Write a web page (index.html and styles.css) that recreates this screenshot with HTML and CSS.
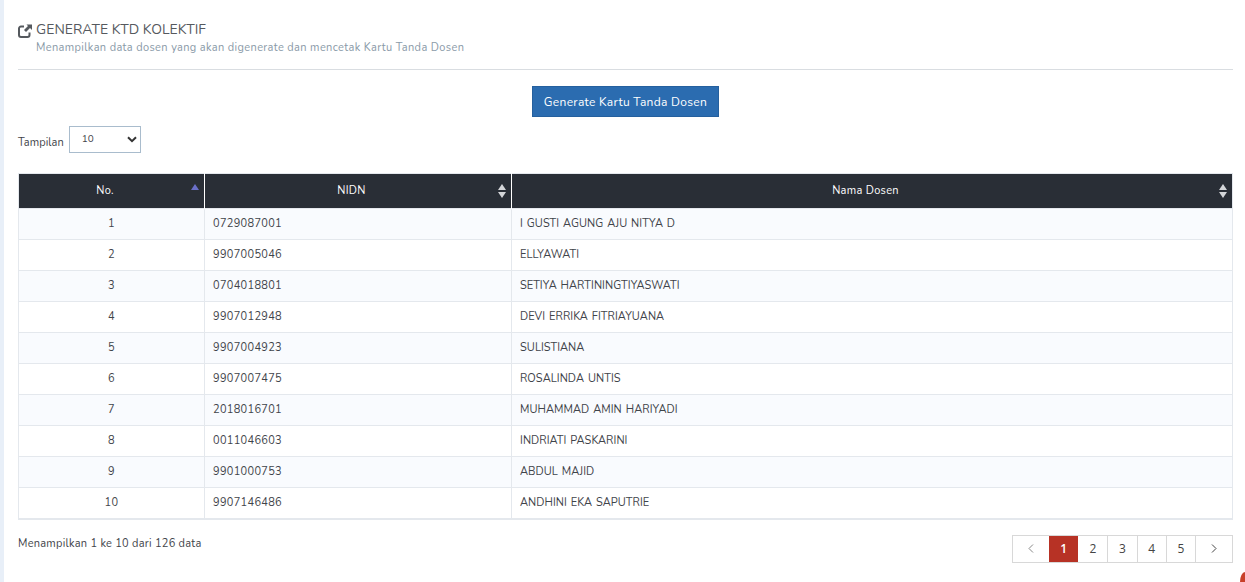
FILE: index.html
```html
<!DOCTYPE html>
<html lang="id">
<head>
  <meta charset="UTF-8">
  <title>Generate KTD Kolektif</title>
  <link rel="stylesheet" href="styles.css">
</head>
<body>
  <div class="content">
    <div class="page-head">
      <div class="page-title">
        <svg class="title-icon" viewBox="0 0 14 14" width="14" height="14">
          <path d="M6 2.500H3A2 2 0 0 0 1 4.500V11a2 2 0 0 0 2 2h6.500a2 2 0 0 0 2-2V8.500" fill="none" stroke="#55595e" stroke-width="2"/>
          <path d="M8.500 0.500H14V6L12 4 8 8 6 6 10 2Z" fill="#55595e"/>
        </svg>
        <span>GENERATE KTD KOLEKTIF</span>
      </div>
      <p class="page-sub">Menampilkan data dosen yang akan digenerate dan mencetak Kartu Tanda Dosen</p>
    </div>

    <div class="action-row">
      <button class="btn-generate">Generate Kartu Tanda Dosen</button>
    </div>

    <div class="length-row">
      <label>Tampilan</label>
      <div class="select-box">
        <span>10</span>
        <svg viewBox="0 0 10 7" width="10" height="7"><path d="M1 1.200 5 5.200 9 1.200" fill="none" stroke="#333" stroke-width="2"/></svg>
      </div>
    </div>

    <table class="data-table">
      <thead>
        <tr>
          <th class="col-no">No.<span class="sort-up"></span></th>
          <th class="col-nidn">NIDN<span class="sort-both"></span></th>
          <th>Nama Dosen<span class="sort-both"></span></th>
        </tr>
      </thead>
      <tbody>
        <tr><td class="num">1</td><td>0729087001</td><td class="name">I GUSTI AGUNG AJU NITYA D</td></tr>
        <tr><td class="num">2</td><td>9907005046</td><td class="name">ELLYAWATI</td></tr>
        <tr><td class="num">3</td><td>0704018801</td><td class="name">SETIYA HARTININGTIYASWATI</td></tr>
        <tr><td class="num">4</td><td>9907012948</td><td class="name">DEVI ERRIKA FITRIAYUANA</td></tr>
        <tr><td class="num">5</td><td>9907004923</td><td class="name">SULISTIANA</td></tr>
        <tr><td class="num">6</td><td>9907007475</td><td class="name">ROSALINDA UNTIS</td></tr>
        <tr><td class="num">7</td><td>2018016701</td><td class="name">MUHAMMAD AMIN HARIYADI</td></tr>
        <tr><td class="num">8</td><td>0011046603</td><td class="name">INDRIATI PASKARINI</td></tr>
        <tr><td class="num">9</td><td>9901000753</td><td class="name">ABDUL MAJID</td></tr>
        <tr><td class="num">10</td><td>9907146486</td><td class="name">ANDHINI EKA SAPUTRIE</td></tr>
      </tbody>
    </table>

    <div class="table-foot">
      <div class="info">Menampilkan 1 ke 10 dari 126 data</div>
      <div class="pagination">
        <a class="page-prev"><svg viewBox="0 0 6 9" width="6" height="9"><path d="M5 0.500 1 4.500 5 8.500" fill="none" stroke="#888" stroke-width="1"/></svg></a>
        <a class="active">1</a>
        <a>2</a>
        <a>3</a>
        <a>4</a>
        <a>5</a>
        <a class="page-next"><svg viewBox="0 0 6 9" width="6" height="9"><path d="M1 0.500 5 4.500 1 8.500" fill="none" stroke="#444" stroke-width="1"/></svg></a>
      </div>
    </div>
  </div>
  <div class="corner-dot"></div>
</body>
</html>
```

FILE: styles.css
```css
html, body {
  height: 100%;
}
body {
  margin: 0;
  background: #fff;
  color: #3f444a;
  font-family: "Nunito", "Open Sans", sans-serif;
  font-size: 11px;
  overflow: hidden;
  border-left: 4px solid #e8eff8;
  box-sizing: border-box;
  position: relative;
}
.content {
  padding: 21px 12px 0 14px;
}
.page-head {
  padding-bottom: 13px;
  border-bottom: 1px solid #d9dde1;
  height: 35px;
}
.page-title {
  display: flex;
  align-items: center;
  gap: 4px;
  font-size: 14px;
  line-height: 17px;
  color: #55595e;
  letter-spacing: 0.05px;
}
.title-icon {
  margin-top: 2px;
}
.page-sub {
  margin: 3px 0 0 18px;
  font-size: 11px;
  line-height: 14px;
  color: #8a9aa8;
  letter-spacing: 0.36px;
}
.action-row {
  display: flex;
  justify-content: center;
  padding-top: 16px;
}
.btn-generate {
  width: 187px;
  height: 31px;
  background: #2b6cb0;
  border: 1px solid #25609e;
  color: #fff;
  font-family: inherit;
  font-size: 12px;
  letter-spacing: 0.3px;
  padding: 0;
}
.length-row {
  display: flex;
  align-items: center;
  gap: 5px;
  margin-top: 9px;
  height: 27px;
  font-size: 11px;
  letter-spacing: 0.05px;
}
.length-row label {
  padding-top: 5px;
}
.select-box {
  width: 72px;
  height: 27px;
  box-sizing: border-box;
  border: 1px solid #a9bccd;
  display: flex;
  align-items: center;
  justify-content: space-between;
  padding: 0 3px 0 12px;
  font-size: 10px;
}
.select-box span {
  padding-bottom: 1px;
}
.data-table {
  width: 1215px;
  margin-top: 20px;
  border-collapse: collapse;
  table-layout: fixed;
  border: 1px solid #e4e8ed;
  border-bottom: 2px solid #e4e8ed;
}
.data-table th,
.data-table td {
  box-sizing: border-box;
}
.data-table th {
  position: relative;
  height: 35px;
  padding: 0 13px 1px 0;
  background: #292e36;
  color: #fff;
  font-size: 11px;
  font-weight: 400;
  letter-spacing: 0.3px;
  border-left: 1px solid #fff;
  text-align: center;
}
.data-table th:first-child {
  border-left: 0;
}
.col-no {
  width: 186px;
}
.col-nidn {
  width: 307px;
}
.data-table td {
  height: 31px;
  padding: 0 0 1px 8px;
  border: 1px solid #e4e8ed;
  font-size: 11px;
  letter-spacing: 0.3px;
  color: #3f444a;
}
.data-table td.num {
  padding: 0 0 1px 0;
  text-align: center;
}
.data-table td.name {
  letter-spacing: 0.06px;
  word-spacing: 1px;
}
.data-table tbody tr:nth-child(odd) td {
  background: #f9fbfe;
}
.sort-up {
  position: absolute;
  top: 10px;
  right: 5px;
  width: 0;
  height: 0;
  border-left: 4px solid transparent;
  border-right: 4px solid transparent;
  border-bottom: 6px solid #6a6fc8;
}
.sort-both {
  position: absolute;
  top: 10px;
  right: 5px;
  width: 0;
  height: 0;
  border-left: 4px solid transparent;
  border-right: 4px solid transparent;
  border-bottom: 6px solid #d4d6d9;
}
.sort-both::after {
  content: "";
  position: absolute;
  top: 8px;
  left: -4px;
  width: 0;
  height: 0;
  border-left: 4px solid transparent;
  border-right: 4px solid transparent;
  border-top: 6px solid #d4d6d9;
}
.table-foot {
  display: flex;
  justify-content: space-between;
  align-items: flex-start;
  margin-top: 16px;
}
.info {
  font-size: 11px;
  letter-spacing: 0.26px;
  line-height: 16px;
}
.pagination {
  display: flex;
  margin-top: -1px;
  border: 1px solid #d8d8d8;
  height: 26px;
  font-family: "Open Sans", sans-serif;
  font-size: 12px;
  color: #444;
}
.pagination a {
  width: 29.2px;
  box-sizing: border-box;
  display: flex;
  align-items: center;
  justify-content: center;
  border-left: 1px solid #d8d8d8;
}
.pagination a.active {
  background: #b73225;
  color: #fff;
  font-weight: 600;
  border-left: 0;
}
.pagination a.active + a {
  border-left: 0;
}
.pagination a.page-prev {
  width: 36px;
  border-left: 0;
}
.pagination a.page-next {
  width: 37px;
}
.corner-dot {
  position: absolute;
  right: 0;
  bottom: 0;
  width: 5px;
  height: 10px;
  border-top-left-radius: 100%;
  background: #c8402a;
}
```
